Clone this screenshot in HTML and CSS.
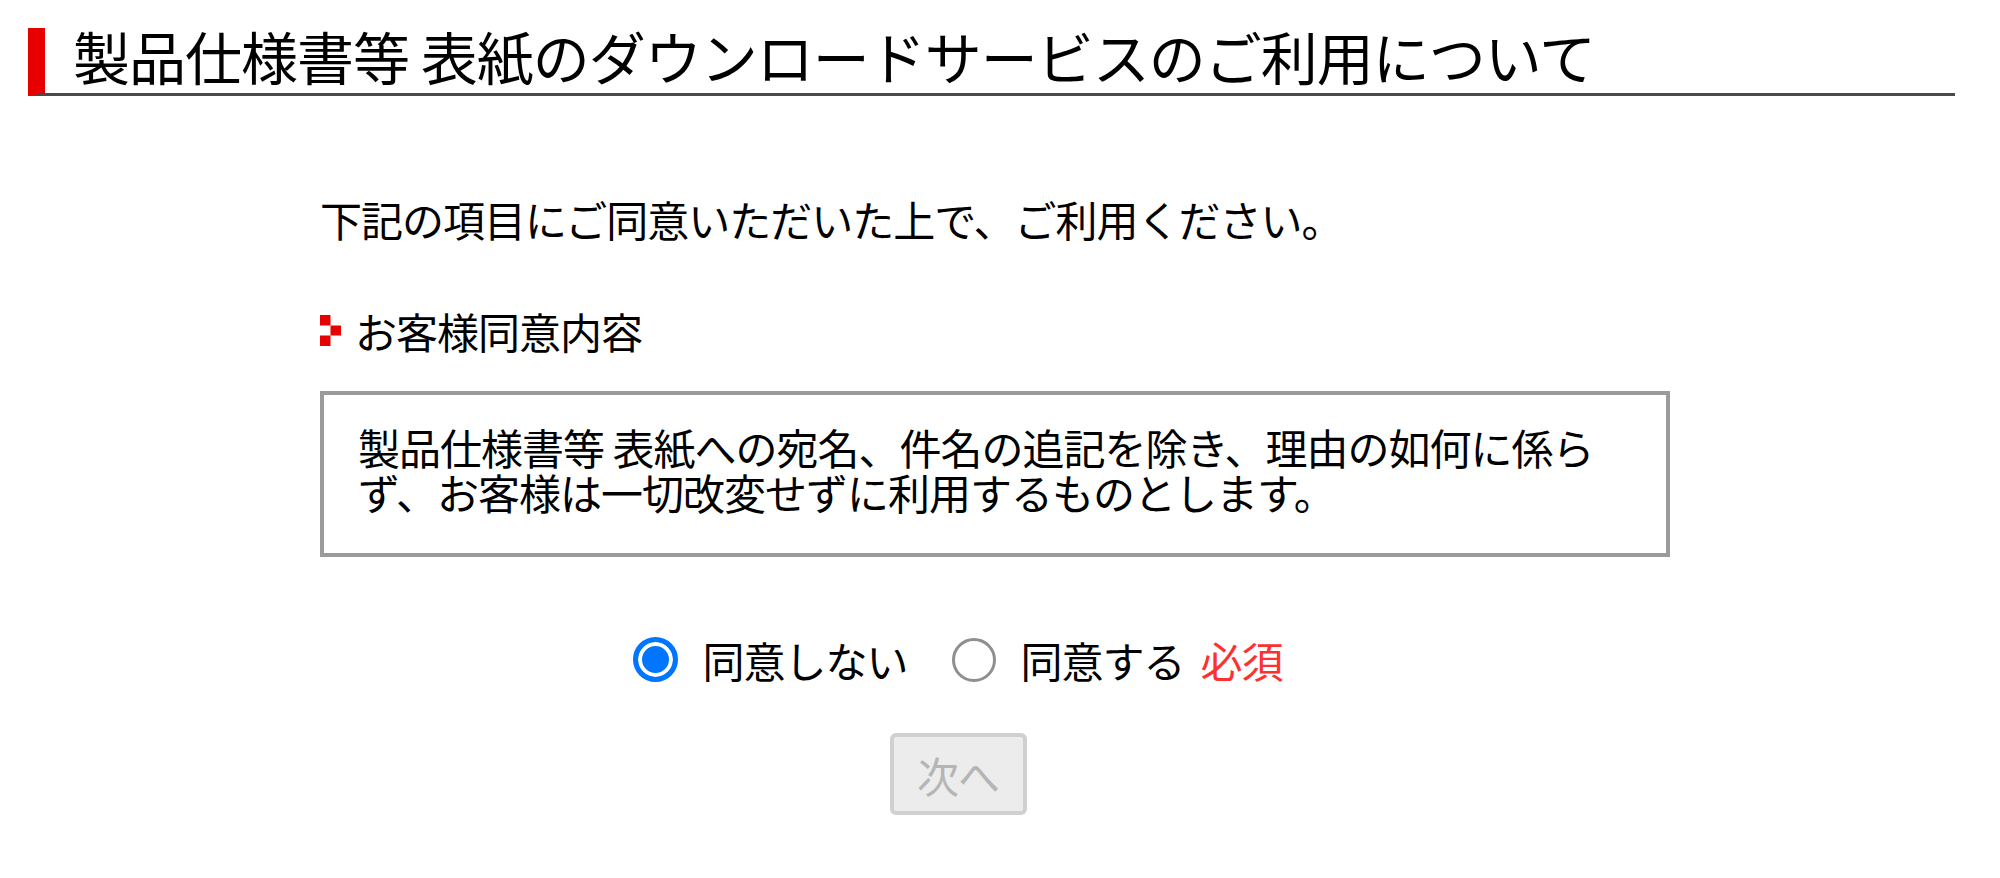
FILE: index.html
```html
<!DOCTYPE html>
<html lang="ja">
<head>
    <meta charset="UTF-8">
    <meta name="viewport" content="width=device-width, initial-scale=1.0">
    <title>製品仕様書等 表紙のダウンロードサービスのご利用について</title>
    <link rel="stylesheet" href="styles.css">
</head>
<body>
    <h1 class="page-title">製品仕様書等 表紙のダウンロードサービスのご利用について</h1>

    <div class="content">
        <p class="lead">下記の項目にご同意いただいた上で、ご利用ください。</p>

        <p class="section-label">
            <svg class="arrow-icon" width="21" height="31" viewBox="0 0 21 31">
                <rect x="0" y="0" width="10.5" height="10.5" fill="#e60000"/>
                <rect x="10.5" y="10.5" width="10.5" height="10" fill="#e60000"/>
                <rect x="0" y="20.5" width="10.5" height="10.5" fill="#e60000"/>
            </svg>
            お客様同意内容
        </p>

        <div class="agree-box">
            製品仕様書等 表紙への宛名、件名の追記を除き、理由の如何に係らず、お客様は一切改変せずに利用するものとします。
        </div>

        <form class="agree-form">
            <div class="radio-row">
                <label class="radio-item">
                    <input type="radio" name="agree" value="no" checked>
                    <span>同意しない</span>
                </label>
                <label class="radio-item">
                    <input type="radio" name="agree" value="yes">
                    <span>同意する</span>
                </label>
                <span class="required">必須</span>
            </div>
            <button type="submit" class="next-btn" disabled>次へ</button>
        </form>
    </div>
</body>
</html>
```

FILE: styles.css
```css
body {
    margin: 0;
    padding: 0;
    background-color: #fff;
    color: #000;
    font-family: "Noto Sans CJK JP", "Noto Sans", sans-serif;
}
.page-title {
    margin: 28px 45px 0 28px;
    padding: 0 0 10px 28px;
    border-left: 17px solid #e60000;
    border-bottom: 3px solid #4a4a4a;
    font-size: 57px;
    letter-spacing: -1px;
    line-height: 55px;
    font-weight: normal;
}
.content {
    margin-left: 320px;
    width: 1350px;
    font-size: 42px;
    letter-spacing: -1px;
    line-height: 45px;
}
.lead {
    margin: 100px 0 0 0;
}
.section-label {
    display: flex;
    align-items: center;
    margin: 67px 0 0 0;
}
.arrow-icon {
    margin: 0 14px 0 0;
}
.agree-box {
    margin-top: 38px;
    border: 4px solid #9b9b9b;
    padding: 29px 53px 39px 34px;
}
.agree-form {
    width: 1276px;
    display: flex;
    flex-direction: column;
    align-items: center;
}
.radio-row {
    display: flex;
    align-items: center;
    margin-top: 80px;
}
.radio-item {
    display: flex;
    align-items: center;
    margin-right: 45px;
}
.radio-item:nth-child(2) {
    margin-right: 16px;
}
.radio-item input {
    appearance: none;
    -webkit-appearance: none;
    box-sizing: border-box;
    width: 44px;
    height: 44px;
    margin: 0 24px 0 0;
    border: 3px solid #8f8f8f;
    border-radius: 50%;
    background-color: #fff;
}
.radio-item input:checked {
    width: 45px;
    height: 45px;
    border: 5px solid #0075ff;
    background-color: #0075ff;
    box-shadow: inset 0 0 0 4px #fff;
}
.required {
    color: #ff3030;
}
.next-btn {
    margin-top: 51px;
    width: 137px;
    height: 82px;
    padding: 0;
    font-family: inherit;
    font-size: 42px;
    letter-spacing: -1px;
    color: #b5b5b5;
    background-color: #ececec;
    border: 4px solid #d0d0d0;
    border-radius: 6px;
}
```
